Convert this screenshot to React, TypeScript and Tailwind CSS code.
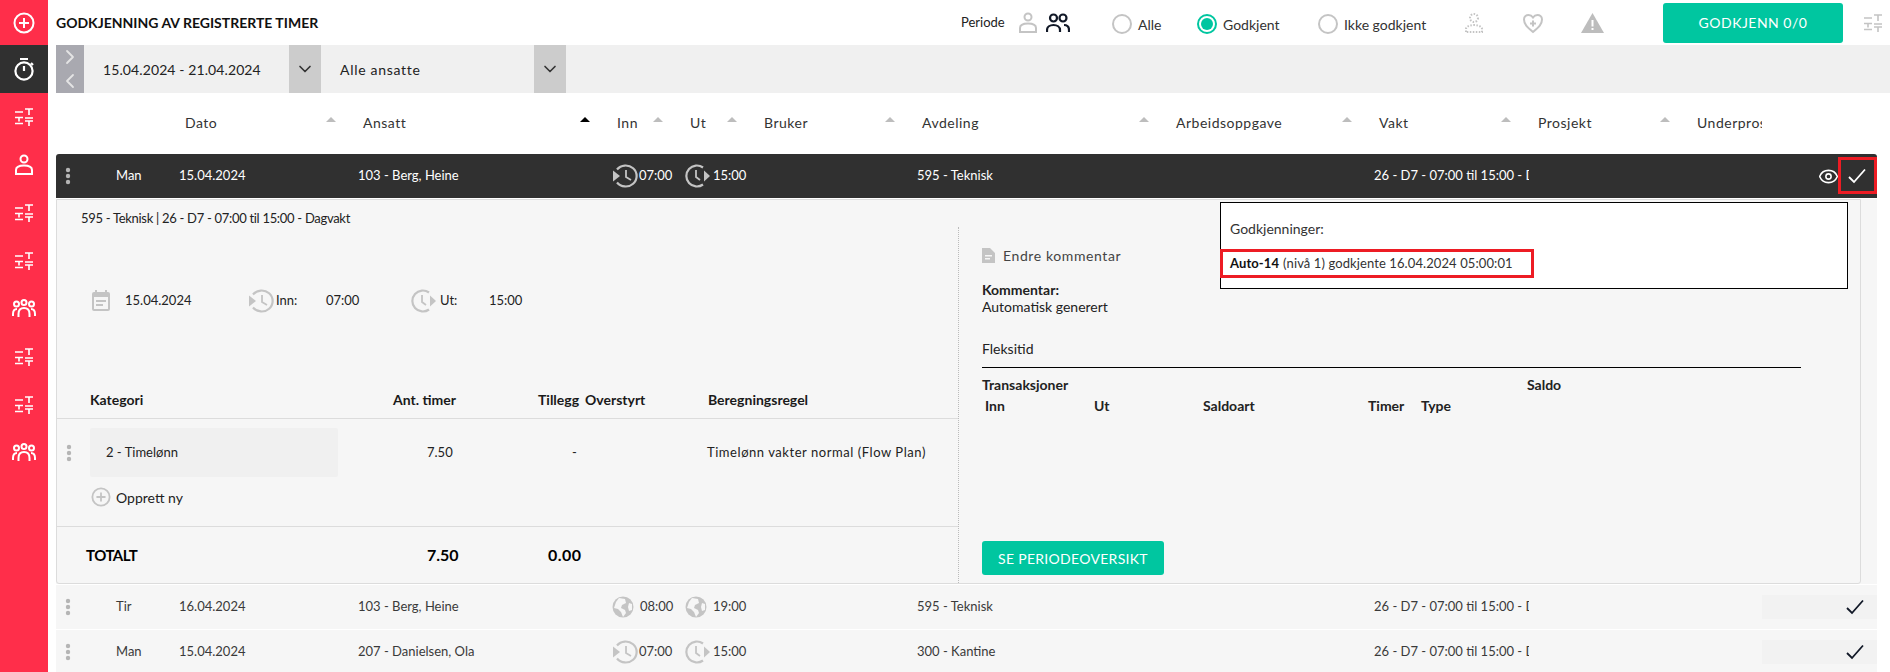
import { ChevronDown, ChevronLeft, ChevronRight, Eye } from 'lucide-react'

function PlusCircle({ color = 'currentColor', size = 22 }: { color?: string; size?: number }) {
  return (
    <svg width={size} height={size} viewBox="0 0 22 22" fill="none" stroke={color} strokeWidth="2">
      <circle cx="11" cy="11" r="9.5" />
      <path d="M11 6v10M6 11h10" />
    </svg>
  )
}

function Timer() {
  return (
    <svg width="22" height="24" viewBox="0 0 22 24" fill="none" stroke="white" strokeWidth="2.2">
      <circle cx="11" cy="14" r="8.6" />
      <path d="M7 2h8M11 9v5M18 6l2 2" />
    </svg>
  )
}

function Sliders({ color = 'white' }: { color?: string }) {
  return (
    <svg width="18" height="18" viewBox="0 0 18 18" fill="none" stroke={color} strokeWidth="1.6">
      <path d="M0 4h8M10 1h8M14 1v6M0 9.5h8M4 9.5v4M10 10h8M0 15.5h8M10 13h8M14 13v5" />
    </svg>
  )
}

function Person({ color = 'white' }: { color?: string }) {
  return (
    <svg width="20" height="22" viewBox="0 0 20 22" fill="none" stroke={color} strokeWidth="2">
      <circle cx="10" cy="5" r="3.5" />
      <path d="M2 20v-4c0-3 3-4.500 8-4.500s8 1.500 8 4.500v4z" />
    </svg>
  )
}

function Group({ size = 24 }: { size?: number }) {
  return (
    <svg width={size} height={size * 0.8} viewBox="0 0 24 19" fill="none" stroke="white" strokeWidth="2">
      <circle cx="4.500" cy="5" r="2.500" />
      <circle cx="12" cy="3.500" r="2.500" />
      <circle cx="19.500" cy="5" r="2.500" />
      <path d="M1 17v-2c0-3 1-5 4-5M23 17v-2c0-3-1-5-4-5M6.500 18v-3c0-3.500 2-6 5.500-6s5.500 2.500 5.500 6v3" />
    </svg>
  )
}

function People() {
  return (
    <svg width="24" height="20" viewBox="0 0 24 20" fill="none" stroke="#111827" strokeWidth="2.2">
      <circle cx="7.500" cy="5" r="3.500" />
      <circle cx="17" cy="5" r="3.500" />
      <path d="M1 19v-2c0-3 3-5 6.500-5s6.500 2 6.500 5v2M18 12c3 0 5 2 5 5v2" />
    </svg>
  )
}

function ClockIn({ color = '#c4c4c4' }: { color?: string }) {
  return (
    <svg width="26" height="24" viewBox="0 0 26 24" fill="none" stroke={color} strokeWidth="2.2">
      <path d="M5 5.500A11 10.500 0 1 1 5 18.500" />
      <path d="M14 6v7l5 3" strokeWidth="1.800" />
      <path d="M1 6.500l7 5.500-7 5.500z" fill={color} stroke="none" />
    </svg>
  )
}

function ClockOut({ color = '#c4c4c4' }: { color?: string }) {
  return (
    <svg width="26" height="24" viewBox="0 0 26 24" fill="none" stroke={color} strokeWidth="2.2">
      <path d="M18 3.500A10.500 10.500 0 1 0 18 20.500" />
      <path d="M11 6v7l4 3" strokeWidth="1.800" />
      <path d="M19 6.500l6 5.500-6 5.500z" fill={color} stroke="none" />
    </svg>
  )
}

function Globe() {
  return (
    <svg width="22" height="24" viewBox="0 0 22 24">
      <circle cx="11" cy="12" r="10.500" fill="#c4c4c4" />
      <path d="M7 3l6 1 1 4-4 2-1 3 4 2 1 3-3 4-2-5-3-3-4-1 2-6z" fill="#f6f6f6" />
      <path d="M17 8l3 1 0 6-3 1-1-4z" fill="#f6f6f6" />
    </svg>
  )
}

function Check({ color = '#111827' }: { color?: string }) {
  return (
    <svg width="18" height="16" viewBox="0 0 18 16" fill="none" stroke={color} strokeWidth="1.800">
      <path d="M1 9l5 5L17 1.500" />
    </svg>
  )
}

function Dots({ color = '#b5b5b5' }: { color?: string }) {
  return (
    <svg width="6" height="18" viewBox="0 0 6 18" fill={color}>
      <circle cx="3" cy="3" r="2.200" />
      <circle cx="3" cy="9" r="2.200" />
      <circle cx="3" cy="15" r="2.200" />
    </svg>
  )
}

function SortArrow({ active }: { active?: boolean }) {
  return (
    <span className={`w-0 h-0 border-x-[5px] border-x-transparent border-b-[5px] mb-[7px] shrink-0 ${active ? 'border-b-black' : 'border-b-[#bdbdbd]'}`} />
  )
}

function Radio({ label, on }: { label: string; on?: boolean }) {
  return (
    <div className="flex items-center gap-[6px] mt-[3px]">
      <span className={`w-[20px] h-[20px] rounded-full border-2 flex items-center justify-center ${on ? 'border-[#00c6a0]' : 'border-[#c4c4c4]'}`}>
        {on && <span className="w-[12px] h-[12px] rounded-full bg-[#00c6a0]" />}
      </span>
      <span className="text-[14px] text-[#333]">{label}</span>
    </div>
  )
}

function SideItem({ children, dark }: { children: React.ReactNode; dark?: boolean }) {
  return <div className={`h-[48px] flex items-center justify-center shrink-0 ${dark ? 'bg-[#303030]' : ''}`}>{children}</div>
}

const columns = [
  { label: 'Dato', w: 'w-[178px]' },
  { label: 'Ansatt', w: 'w-[254px]', active: true },
  { label: 'Inn', w: 'w-[73px]' },
  { label: 'Ut', w: 'w-[74px]' },
  { label: 'Bruker', w: 'w-[158px]' },
  { label: 'Avdeling', w: 'w-[254px]' },
  { label: 'Arbeidsoppgave', w: 'w-[203px]' },
  { label: 'Vakt', w: 'w-[159px]' },
  { label: 'Prosjekt', w: 'w-[159px]' },
]

function Row({ day, date, name, inn, ut, dept, globe, dark }: { day: string; date: string; name: string; inn: string; ut: string; dept: string; globe?: boolean; dark?: boolean }) {
  const text = dark ? 'text-white' : 'text-[#3a3a3a]'
  return (
    <div className={`h-[44px] flex items-center shrink-0 text-[13px] ${dark ? 'bg-[#303030] rounded-t-[3px]' : 'bg-[#f6f6f6]'} ${text}`}>
      <div className="w-[60px] pl-[9px] flex items-center shrink-0"><Dots /></div>
      <div className="w-[63px] shrink-0">{day}</div>
      <div className="w-[179px] shrink-0">{date}</div>
      <div className="w-[254px] shrink-0">{name}</div>
      <div className="w-[73px] shrink-0 flex items-center gap-[1px]">
        {globe ? <Globe /> : <ClockIn />}
        <span className={globe ? 'ml-[5px]' : ''}>{inn}</span>
      </div>
      <div className="w-[232px] shrink-0 flex items-center gap-[2px]">
        {globe ? <Globe /> : <ClockOut />}
        <span className={globe ? 'ml-[4px]' : ''}>{ut}</span>
      </div>
      <div className="w-[457px] shrink-0">{dept}</div>
      <div className="w-[155px] shrink-0 overflow-hidden whitespace-nowrap">26 - D7 - 07:00 til 15:00 - Dagvakt</div>
      {dark ? (
        <div className="ml-auto flex items-center relative h-full w-[58px]">
          <Eye size={21} className="text-white -ml-[1px]" strokeWidth={1.8} />
          <span className="ml-[9px]"><Check color="white" /></span>
          <span className="absolute right-0 top-[3px] w-[39px] h-[37px] border-[3px] border-[#ed1c24]" />
        </div>
      ) : (
        <div className="ml-auto w-[115px] h-[24px] bg-[#f2f2f2] flex items-center justify-end pr-[13px]">
          <Check />
        </div>
      )}
    </div>
  )
}

export default function App() {
  return (
    <div className="flex w-[1890px] h-[672px] overflow-hidden bg-white font-[Lato,sans-serif] text-[13px] text-[#222]">
      <aside className="w-[48px] shrink-0 bg-[#ff2e4a] flex flex-col">
        <div className="h-[45px] flex items-center justify-center shrink-0"><PlusCircle color="white" /></div>
        <SideItem dark><Timer /></SideItem>
        <SideItem><Sliders /></SideItem>
        <SideItem><Person /></SideItem>
        <SideItem><Sliders /></SideItem>
        <SideItem><Sliders /></SideItem>
        <SideItem><Group /></SideItem>
        <SideItem><Sliders /></SideItem>
        <SideItem><Sliders /></SideItem>
        <SideItem><Group /></SideItem>
      </aside>

      <main className="flex-1 min-w-0 pl-[8px] flex flex-col">
        {/* Top bar */}
        <header className="h-[45px] flex items-center shrink-0">
          <h1 className="text-[14px] font-bold text-[#111] w-[905px] shrink-0">GODKJENNING AV REGISTRERTE TIMER</h1>
          <span className="text-[13px] w-[57px]">Periode</span>
          <span className="w-[28px]"><Person color="#c4c4c4" /></span>
          <span className="w-[66px]"><People /></span>
          <div className="w-[85px]"><Radio label="Alle" /></div>
          <div className="w-[121px]"><Radio label="Godkjent" on /></div>
          <div className="w-[147px]"><Radio label="Ikke godkjent" /></div>
          <span className="w-[57px]">
            <svg width="18" height="22" viewBox="0 0 18 22" fill="none" stroke="#c4c4c4" strokeWidth="2" strokeDasharray="1.500 1.500">
              <circle cx="9" cy="6" r="4" />
              <path d="M1 20v-3c0-2 3-4 8-4s8 2 8 4v3z" />
            </svg>
          </span>
          <span className="w-[59px]">
            <svg width="22" height="22" viewBox="0 0 22 22" fill="none" stroke="#c4c4c4" strokeWidth="2">
              <path d="M11 20C5 15 2 12 2 7.500 2 4.500 4.500 3 6.500 3 8.500 3 10 4 11 5.500 12 4 13.500 3 15.500 3 17.500 3 20 4.500 20 7.500 20 12 17 15 11 20z" />
              <path d="M11 8.500v6M8 11.500h6" />
            </svg>
          </span>
          <span className="w-[82px]">
            <svg width="23" height="20" viewBox="0 0 23 20">
              <path d="M11.500 0L23 20H0z" fill="#bdbdbd" />
              <path d="M11.500 7v6.500M11.500 15v2" stroke="white" strokeWidth="2" />
            </svg>
          </span>
          <button className="w-[180px] h-[40px] rounded-[3px] bg-[#00c6a0] text-white text-[14px] tracking-[0.5px] shrink-0">GODKJENN 0/0</button>
          <span className="ml-[21px]"><Sliders color="#c4c4c4" /></span>
        </header>

        {/* Filter */}
        <div className="h-[48px] bg-[#f0f0f0] flex items-center shrink-0">
          <div className="w-[28px] h-full bg-[#a9a9b0] flex flex-col items-center justify-center text-[#e4e4e4]">
            <ChevronRight size={24} strokeWidth={1.8} />
            <ChevronLeft size={24} strokeWidth={1.8} />
          </div>
          <div className="w-[205px] pl-[19px] text-[14px] text-[#222] tracking-[0.1px]">15.04.2024 - 21.04.2024</div>
          <div className="w-[32px] h-full bg-[#ccc] flex items-center justify-center"><ChevronDown size={20} className="text-[#333]" /></div>
          <div className="w-[213px] pl-[19px] text-[14px] text-[#222] tracking-[0.7px]">Alle ansatte</div>
          <div className="w-[32px] h-full bg-[#ccc] flex items-center justify-center"><ChevronDown size={20} className="text-[#333]" /></div>
        </div>

        {/* Column heads */}
        <div className="h-[61px] pl-[129px] flex items-center shrink-0 text-[14px] tracking-[0.5px] text-[#333] pb-[2px]">
          {columns.map(c => (
            <div key={c.label} className={`${c.w} shrink-0 flex items-center justify-between pr-[27px]`}>
              <span>{c.label}</span>
              <SortArrow active={c.active} />
            </div>
          ))}
          <div className="w-[65px] overflow-hidden whitespace-nowrap">Underprosjekt</div>
        </div>

        {/* Rows */}
        <div className="pr-[13px] flex flex-col flex-1 min-h-0">
          <Row dark day="Man" date="15.04.2024" name="103 - Berg, Heine" inn="07:00" ut="15:00" dept="595 - Teknisk" />

          <div className="relative mt-[1px] h-[385px] shrink-0 bg-[#f6f6f6] pr-[16px]">
            <div className="h-full border border-[#dcdcdc] rounded-b-[3px] flex flex-col">
              <div className="h-[27px] pl-[24px] pt-[9px] leading-[18px] text-[#222] tracking-[-0.3px] shrink-0">595 - Teknisk | 26 - D7 - 07:00 til 15:00 - Dagvakt</div>
              <div className="flex flex-1 min-h-0">
                {/* Left side */}
                <div className="w-[902px] shrink-0 border-r border-dotted border-[#bbb] flex flex-col">
                  <div className="mt-[62px] h-[24px] pl-[35px] flex items-center text-[#222]">
                    <svg width="18" height="22" viewBox="0 0 18 22" fill="#c4c4c4">
                      <path d="M3 0h2v2h8V0h2v2h1a2 2 0 0 1 2 2v15a2 2 0 0 1-2 2H2a2 2 0 0 1-2-2V4a2 2 0 0 1 2-2h1zM2 7v12h14V7zM4 10h10v2H4zM4 14h7v2H4z" />
                    </svg>
                    <span className="ml-[15px] w-[123px]">15.04.2024</span>
                    <ClockIn />
                    <span className="ml-[2px] w-[50px]">Inn:</span>
                    <span className="w-[85px]">07:00</span>
                    <ClockOut />
                    <span className="ml-[3px] w-[49px]">Ut:</span>
                    <span>15:00</span>
                  </div>

                  <div className="mt-[75px] h-[31px] pb-[7px] border-b border-[#dcdcdc] pl-[33px] flex items-center font-bold text-[14px] text-[#1a1a1a] shrink-0">
                    <span className="w-[303px]">Kategori</span>
                    <span className="w-[145px]">Ant. timer</span>
                    <span className="w-[47px]">Tillegg</span>
                    <span className="w-[123px]">Overstyrt</span>
                    <span>Beregningsregel</span>
                  </div>

                  <div className="mt-[9px] h-[49px] flex items-center text-[#222] shrink-0">
                    <span className="w-[33px] pl-[9px]"><Dots /></span>
                    <div className="w-[248px] h-full bg-[#f0f0f0] rounded-[2px] flex items-center pl-[16px]">2 - Timelønn</div>
                    <span className="ml-[89px] w-[145px]">7.50</span>
                    <span className="w-[135px]">-</span>
                    <span className="tracking-[0.55px]">Timelønn vakter normal (Flow Plan)</span>
                  </div>

                  <div className="mt-[10px] h-[20px] pl-[34px] flex items-center gap-[5px] text-[14px] shrink-0">
                    <PlusCircle color="#c4c4c4" size={20} />
                    <span>Opprett ny</span>
                  </div>

                  <div className="mt-[19px] flex-1 border-t border-[#dcdcdc] pl-[29px] flex items-center font-bold text-[16px] text-black">
                    <span className="w-[341px] text-[15px] tracking-[-0.5px]">TOTALT</span>
                    <span className="w-[121px]">7.50</span>
                    <span className="tracking-[0.5px]">0.00</span>
                  </div>
                </div>

                {/* Right side */}
                <div className="flex-1 pl-[23px] pb-[8px] flex flex-col">
                  <div className="mt-[18px] h-[20px] flex items-center gap-[8px] text-[14px] text-[#444] tracking-[0.6px]">
                    <svg width="13" height="15" viewBox="0 0 13 15" fill="#c4c4c4">
                      <path d="M0 0h8l5 5v10H0zM3 7v1.500h7V7zM3 10v1.500h5V10z" />
                    </svg>
                    Endre kommentar
                  </div>
                  <div className="mt-[16px] leading-[17px] text-[14px]">
                    <div className="font-bold">Kommentar:</div>
                    <div>Automatisk generert</div>
                  </div>
                  <div className="mt-[25px] h-[18px] text-[14px] leading-[18px]">Fleksitid</div>
                  <div className="mt-[9px] w-[819px] border-t border-black" />
                  <div className="mt-[7px] h-[18px] flex font-bold items-center text-[14px]">
                    <span className="w-[545px]">Transaksjoner</span>
                    <span>Saldo</span>
                  </div>
                  <div className="mt-[3px] h-[18px] pl-[3px] flex font-bold items-center text-[14px]">
                    <span className="w-[109px]">Inn</span>
                    <span className="w-[109px]">Ut</span>
                    <span className="w-[165px]">Saldoart</span>
                    <span className="w-[53px]">Timer</span>
                    <span>Type</span>
                  </div>
                  <button className="mt-auto w-[182px] h-[34px] rounded-[3px] bg-[#00c6a0] text-white text-[14px] tracking-[0.3px]">SE PERIODEOVERSIKT</button>
                </div>
              </div>
            </div>

            {/* Approval popover */}
            <div className="absolute left-[1164px] top-[3px] w-[628px] h-[87px] bg-white border border-black">
              <div className="pl-[9px] pt-[16px] h-[46px] text-[14px] text-[#333] leading-[20px]">Godkjenninger:</div>
              <div className="w-[314px] h-[29px] border-[3px] border-[#ed1c24] -ml-[1px] pl-[7px] flex items-center gap-[4px] whitespace-nowrap text-[#333] tracking-[0.1px]">
                <b className="text-[#111]">Auto-14</b> (nivå 1) godkjente 16.04.2024 05:00:01
              </div>
            </div>
          </div>

          <div className="mt-[1px] flex flex-col gap-[1px]">
            <Row globe day="Tir" date="16.04.2024" name="103 - Berg, Heine" inn="08:00" ut="19:00" dept="595 - Teknisk" />
            <Row day="Man" date="15.04.2024" name="207 - Danielsen, Ola" inn="07:00" ut="15:00" dept="300 - Kantine" />
          </div>
        </div>
      </main>
    </div>
  )
}
